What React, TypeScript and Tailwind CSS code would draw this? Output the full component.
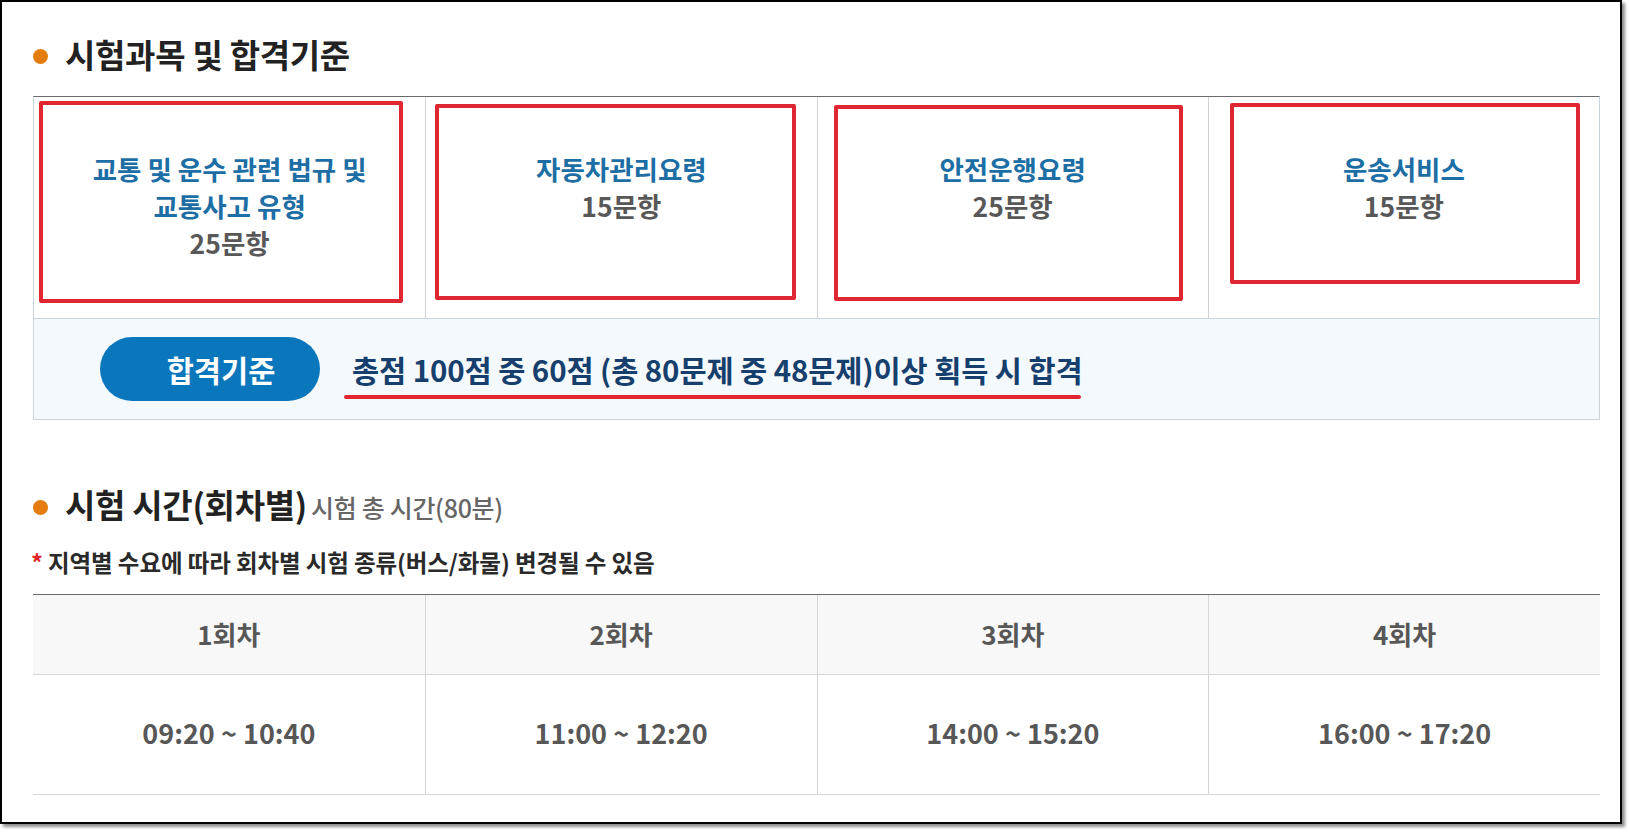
import React from "react";

interface Subject {
  id: string;
  lines: string[];
  count: string;
  box: string; // annotation frame offsets
}

const subjects: Subject[] = [
  {
    id: "law",
    lines: ["교통 및 운수 관련 법규 및", "교통사고 유형"],
    count: "25문항",
    box: "left-[5px] top-[4px] right-[22px] bottom-[15px]",
  },
  {
    id: "car",
    lines: ["자동차관리요령"],
    count: "15문항",
    box: "left-[9px] top-[7px] right-[21px] bottom-[18px]",
  },
  {
    id: "safe",
    lines: ["안전운행요령"],
    count: "25문항",
    box: "left-[16px] top-[8px] right-[25px] bottom-[17px]",
  },
  {
    id: "service",
    lines: ["운송서비스"],
    count: "15문항",
    box: "left-[21px] top-[6px] right-[19px] bottom-[34px]",
  },
];

const sessions = [
  { id: "1", label: "1회차", time: "09:20 ~ 10:40" },
  { id: "2", label: "2회차", time: "11:00 ~ 12:20" },
  { id: "3", label: "3회차", time: "14:00 ~ 15:20" },
  { id: "4", label: "4회차", time: "16:00 ~ 17:20" },
];

const SectionTitle: React.FC<{ children: React.ReactNode }> = ({ children }) => (
  <div className="flex items-center gap-[17px] h-[40px]">
    <span className="w-[15px] h-[15px] rounded-full bg-[#e47d0e] mt-[4px] shrink-0" />
    <div className="flex items-baseline">{children}</div>
  </div>
);

export default function App() {
  return (
    <div className="w-[1630px] h-[833px] bg-white font-['Noto_Sans_CJK_KR','Noto_Sans',sans-serif]">
      <div className="w-[1622px] h-[824px] border-2 border-black bg-white shadow-[3px_3px_3px_rgba(0,0,0,0.45)] pl-[31px] pt-[32px]">
        <div className="w-[1567px] flex flex-col">
          <SectionTitle>
            <h2 className="text-[33px] leading-[40px] font-bold text-[#222] tracking-[-0.3px]">
              시험과목 및 합격기준
            </h2>
          </SectionTitle>

          {/* subjects table */}
          <div className="mt-[22px] border-t border-[#6b6b6b] border-x border-x-[#c9d3da]">
            <div className="grid grid-cols-4 h-[221px]">
              {subjects.map((s, i) => (
                <div
                  key={s.id}
                  className={`relative pt-[53px] text-center text-[26.5px] leading-[37px] font-bold ${
                    i > 0 ? "border-l border-[#d2d2d2]" : ""
                  }`}
                >
                  {s.lines.map((l) => (
                    <p key={l} className="text-[#1c6ea4]">
                      {l}
                    </p>
                  ))}
                  <p className="text-[#585858]">{s.count}</p>
                  <span
                    className={`absolute ${s.box} border-[4px] border-[#e02630] rounded-[2px] pointer-events-none`}
                  />
                </div>
              ))}
            </div>
            <div className="h-[102px] bg-[#f3f9fd] border-y border-[#c9d6df] flex items-center pl-[66px]">
              <div className="w-[220px] h-[64px] rounded-full bg-[#0a77bd] flex items-center justify-center pl-[22px] text-white text-[29.5px] font-bold">
                합격기준
              </div>
              <div className="relative ml-[32px]">
                <span className="text-[29.5px] leading-[40px] font-bold text-[#173f6d] tracking-[-0.1px]">
                  총점 100점 중 60점 (총 80문제 중 48문제)이상 획득 시 합격
                </span>
                <span className="absolute left-[-8px] right-[2px] bottom-[-10px] h-[4px] rounded-full bg-[#e02630]" />
              </div>
            </div>
          </div>

          <div className="mt-[65px]">
            <SectionTitle>
              <h2 className="text-[33px] leading-[40px] font-bold text-[#222] tracking-[-0.3px]">
                시험 시간(회차별)
              </h2>
              <span className="ml-[4px] text-[25px] font-medium text-[#666] tracking-[-0.3px]">
                시험 총 시간(80분)
              </span>
            </SectionTitle>
          </div>

          <p className="mt-[22px] -ml-[2px] text-[23.5px] leading-[30px] font-bold text-[#2a2a2a] tracking-[-0.1px]">
            <span className="text-[#e0262a]">*</span> 지역별 수요에 따라 회차별 시험 종류(버스/화물) 변경될 수 있음
          </p>

          {/* session table */}
          <div className="mt-[17px] border-t border-[#6b6b6b] border-b border-b-[#d9d9d9]">
            <div className="grid grid-cols-4 h-[80px] bg-[#f8f8f8] border-b border-[#d9d9d9]">
              {sessions.map((s, i) => (
                <div
                  key={s.id}
                  className={`flex items-center justify-center pb-[2px] text-[26px] font-bold text-[#575757] ${
                    i > 0 ? "border-l border-[#d5d5d5]" : ""
                  }`}
                >
                  {s.label}
                </div>
              ))}
            </div>
            <div className="grid grid-cols-4 h-[119px]">
              {sessions.map((s, i) => (
                <div
                  key={s.id}
                  className={`flex items-center justify-center pb-[2px] text-[27px] font-bold text-[#575757] ${
                    i > 0 ? "border-l border-[#d5d5d5]" : ""
                  }`}
                >
                  {s.time}
                </div>
              ))}
            </div>
          </div>
        </div>
      </div>
    </div>
  );
}
